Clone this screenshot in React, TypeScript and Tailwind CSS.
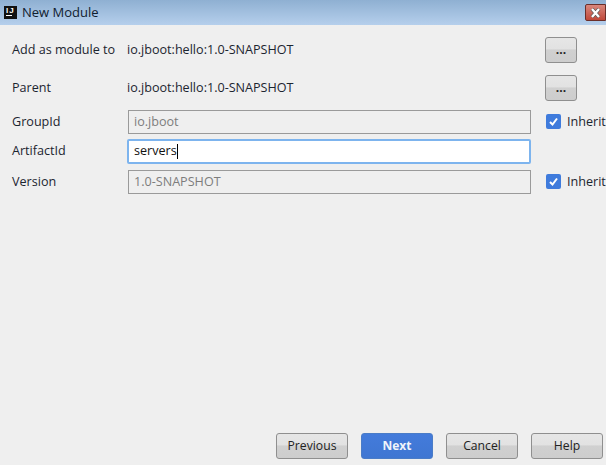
import React from "react";

const font = "font-['Open_Sans','Noto_Sans',sans-serif]";

const Label = ({ children }: { children: React.ReactNode }) => (
  <span className="w-[115px] shrink-0 whitespace-nowrap text-[12.6px] text-[#1c2530]">{children}</span>
);

const DotsButton = () => (
  <button className="ml-auto mr-[29px] flex h-[26px] w-[32px] items-center justify-center rounded-[3px] border border-[#8f8f8f] bg-[linear-gradient(#e6e6e6,#e2e2e2_45%,#d0d0d0_50%,#cdcdcd)] text-[12px] font-bold leading-none text-[#222]">
    ...
  </button>
);

const Inherit = () => (
  <div className="ml-[15px] flex items-center gap-[6px]">
    <span className="flex h-[15px] w-[15px] items-center justify-center rounded-[2px] bg-[#3f7bdc]">
      <svg width="11" height="11" viewBox="0 0 11 11" fill="none">
        <path d="M2 6 L4.5 8.5 L9 2.5" stroke="#fff" strokeWidth="2" />
      </svg>
    </span>
    <span className="text-[12.6px] text-[#1c2530]">Inherit</span>
  </div>
);

const Field = ({ value }: { value: string }) => (
  <div className="flex h-[24px] w-[403px] shrink-0 items-center border border-[#9a9a9a] pl-[5px] text-[12.6px] text-[#7d7d7d]">
    {value}
  </div>
);

const FooterButton = ({ label, primary }: { label: string; primary?: boolean }) => (
  <button
    className={
      primary
        ? "h-[26px] w-[72px] rounded-[3px] border border-[#4a7cc7] bg-[linear-gradient(#437bdb,#3f76d2)] text-[12px] font-bold text-[#f0f4fa]"
        : "h-[26px] w-[72px] rounded-[3px] border border-[#8f8f8f] bg-[linear-gradient(#e6e6e6,#e2e2e2_45%,#d0d0d0_50%,#cdcdcd)] text-[12.2px] text-[#222]"
    }
  >
    {label}
  </button>
);

export default function App() {
  return (
    <div className={`flex h-[465px] w-[606px] flex-col overflow-hidden bg-[#efefef] ${font}`}>
      <div className="flex h-[25px] shrink-0 items-center bg-[linear-gradient(#8fb0d2,#b5cfec)] pl-[4px]">
        <div className="flex h-[13px] w-[13px] flex-col bg-[#111] pl-[2px] pt-[1px] font-['Liberation_Sans',sans-serif]">
          <span className="text-[8px] font-bold leading-[7px] tracking-[1px] text-white">IJ</span>
          <span className="mt-[1px] h-[1px] w-[6px] bg-white" />
        </div>
        <span className="ml-[5px] text-[13px] text-[#10202f]">New Module</span>
        <div className="ml-auto flex h-[17px] w-[21px] items-center justify-center rounded-l-[2px] border border-[#6b2f2a] bg-[linear-gradient(#d9877c,#c0483a)]">
          <svg width="13" height="10" viewBox="0 0 13 10" fill="none">
            <path d="M3 1 L10 9 M10 1 L3 9" stroke="#555" strokeWidth="3.6" />
            <path d="M3 1 L10 9 M10 1 L3 9" stroke="#fff" strokeWidth="2.4" />
          </svg>
        </div>
      </div>

      <div className="flex grow flex-col pl-[12px] pt-[12px]">
        <div className="flex h-[26px] items-center">
          <Label>Add as module to</Label>
          <span className="text-[12.6px] text-[#1c2530]">io.jboot:hello:1.0-SNAPSHOT</span>
          <DotsButton />
        </div>
        <div className="mt-[12px] flex h-[26px] items-center">
          <Label>Parent</Label>
          <span className="text-[12.6px] text-[#1c2530]">io.jboot:hello:1.0-SNAPSHOT</span>
          <DotsButton />
        </div>
        <div className="mt-[9px] flex h-[24px] items-center whitespace-nowrap">
          <span className="w-[116px] shrink-0 text-[12.6px] text-[#1c2530]">GroupId</span>
          <Field value="io.jboot" />
          <Inherit />
        </div>
        <div className="mt-[5px] flex h-[25px] items-center">
          <span className="w-[115px] shrink-0 text-[12.6px] text-[#1c2530]">ArtifactId</span>
          <div className="flex h-[25px] w-[404px] shrink-0 items-center rounded-[2px] border-2 border-[#7db4ee] bg-white pl-[5px] text-[12.6px] text-[#111]">
            servers
            <span className="h-[15px] w-[1px] bg-black" />
          </div>
        </div>
        <div className="mt-[6px] flex h-[24px] items-center whitespace-nowrap">
          <span className="w-[116px] shrink-0 text-[12.6px] text-[#1c2530]">Version</span>
          <Field value="1.0-SNAPSHOT" />
          <Inherit />
        </div>
      </div>

      <div className="flex justify-end gap-[13px] pb-[6px] pr-[3px]">
        <FooterButton label="Previous" />
        <FooterButton label="Next" primary />
        <FooterButton label="Cancel" />
        <FooterButton label="Help" />
      </div>
    </div>
  );
}
